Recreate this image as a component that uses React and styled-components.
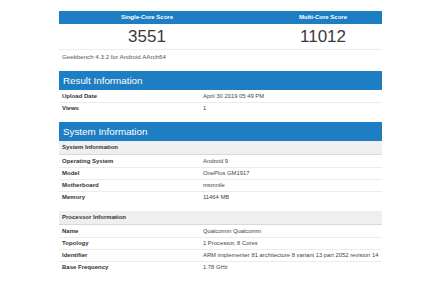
import React from 'react';
import styled, { createGlobalStyle } from 'styled-components';

const GlobalStyle = createGlobalStyle`
  html, body {
    margin: 0;
    padding: 0;
    background: #ffffff;
  }
  body {
    font-family: "Liberation Sans", Arial, Helvetica, sans-serif;
    color: #333;
  }
`;

const BLUE = '#1d7ec3';

const Page = styled.div`
  width: 323px;
  margin-left: 59px;
  padding-top: 11px;
`;

const ScoreHead = styled.div`
  display: grid;
  grid-template-columns: 176px 118px;
  justify-content: space-between;
  height: 13px;
  background: ${BLUE};
`;

const ScoreLabel = styled.div`
  color: #fff;
  font-size: 6px;
  font-weight: 700;
  line-height: 13px;
  text-align: center;
`;

const ScoreRow = styled.div`
  display: grid;
  grid-template-columns: 176px 118px;
  justify-content: space-between;
  height: 25px;
  border-bottom: 1px solid #ececec;
`;

const ScoreValue = styled.div`
  font-size: 17px;
  line-height: 25px;
  color: #3a3a3a;
  text-align: center;
`;

const Version = styled.div`
  font-size: 6.2px;
  line-height: 12px;
  color: #555;
  padding: 1px 3px 0;
`;

const Section = styled.section`
  margin-top: 8px;
`;

const SectionTitle = styled.h2`
  margin: 0;
  height: 19px;
  padding-left: 4px;
  background: ${BLUE};
  color: #fff;
  font-size: 9.8px;
  font-weight: 400;
  line-height: 19px;
`;

const Group = styled.div`
  & + & {
    margin-top: 8px;
  }
`;

const SubHead = styled.div`
  height: 13px;
  padding-left: 3px;
  background: #efefef;
  border-bottom: 1px solid #d8d8d8;
  font-size: 6px;
  font-weight: 700;
  line-height: 13px;
  color: #333;
`;

const Row = styled.div`
  display: grid;
  grid-template-columns: 141px 1fr;
  box-sizing: border-box;
  height: 12px;
  padding: 0 3px;
  font-size: 6px;
  line-height: 12px;

  & + & {
    border-top: 1px solid #ececec;
    line-height: 11px;
  }
`;

const Label = styled.div`
  font-weight: 700;
  color: #333;
`;

const Value = styled.div`
  font-size: 5.85px;
  color: #444;
  white-space: nowrap;
`;

const result = [
  ['Upload Date', 'April 30 2019 05:49 PM'],
  ['Views', '1'],
];

const system = [
  {
    title: 'System Information',
    rows: [
      ['Operating System', 'Android 9'],
      ['Model', 'OnePlus GM1917'],
      ['Motherboard', 'msmnile'],
      ['Memory', '11464 MB'],
    ],
  },
  {
    title: 'Processor Information',
    rows: [
      ['Name', 'Qualcomm Qualcomm'],
      ['Topology', '1 Processor, 8 Cores'],
      ['Identifier', 'ARM implementer 81 architecture 8 variant 13 part 2052 revision 14'],
      ['Base Frequency', '1.78 GHz'],
    ],
  },
];

const Rows = ({ items }) =>
  items.map(([k, v]) => (
    <Row key={k}>
      <Label>{k}</Label>
      <Value>{v}</Value>
    </Row>
  ));

const App = () => {
  return (
    <>
      <GlobalStyle />
      <Page>
        <ScoreHead>
          <ScoreLabel>Single-Core Score</ScoreLabel>
          <ScoreLabel>Multi-Core Score</ScoreLabel>
        </ScoreHead>
        <ScoreRow>
          <ScoreValue>3551</ScoreValue>
          <ScoreValue>11012</ScoreValue>
        </ScoreRow>
        <Version>Geekbench 4.3.2 for Android AArch64</Version>

        <Section>
          <SectionTitle>Result Information</SectionTitle>
          <Rows items={result} />
        </Section>

        <Section>
          <SectionTitle>System Information</SectionTitle>
          {system.map((g) => (
            <Group key={g.title}>
              <SubHead>{g.title}</SubHead>
              <Rows items={g.rows} />
            </Group>
          ))}
        </Section>
      </Page>
    </>
  );
};

export default App;
